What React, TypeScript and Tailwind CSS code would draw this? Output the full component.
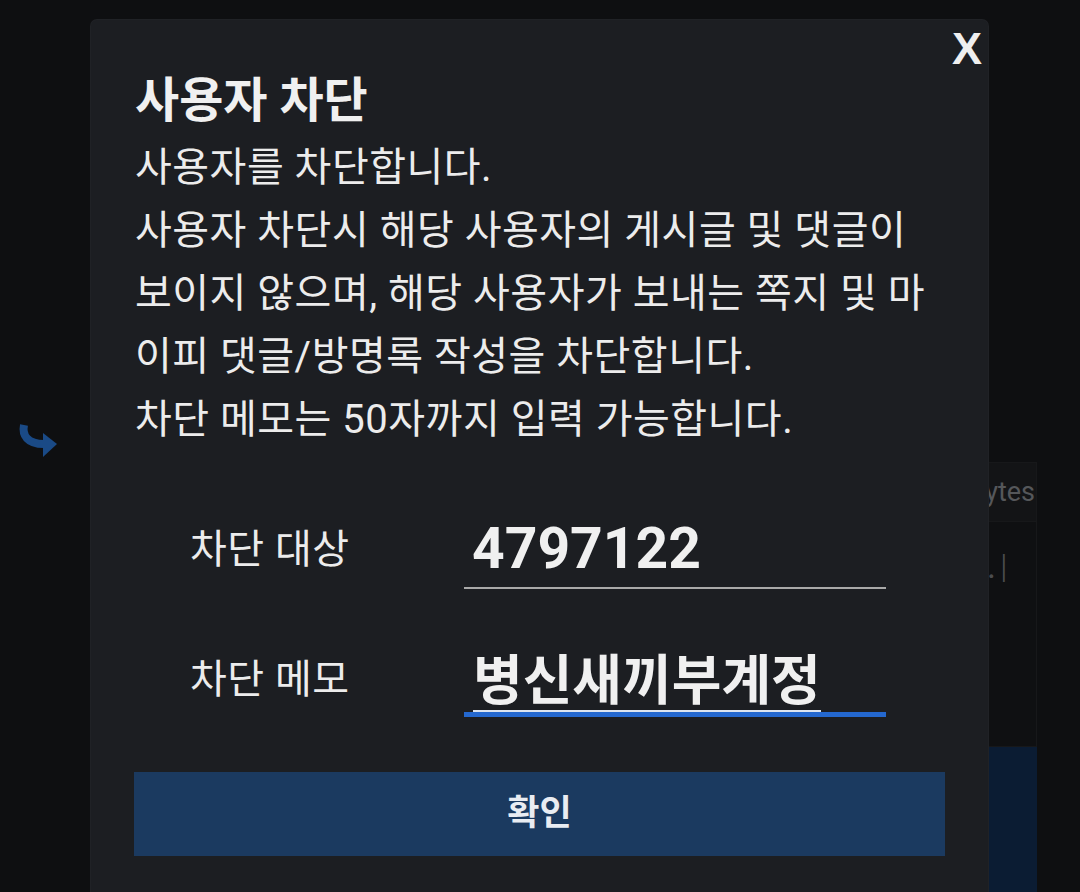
import React from "react";

const bodyLines = [
  "사용자를 차단합니다.",
  "사용자 차단시 해당 사용자의 게시글 및 댓글이",
  "보이지 않으며, 해당 사용자가 보내는 쪽지 및 마",
  "이피 댓글/방명록 작성을 차단합니다.",
  "차단 메모는 50자까지 입력 가능합니다.",
];

const ReplyArrow = () => (
  <svg width="40" height="40" viewBox="0 0 40 40" fill="none">
    <path d="M6 5 C 4 15, 9 24, 26 24" stroke="#1a4a86" strokeWidth="8" strokeLinecap="butt" />
    <polygon points="25,13 39,24 25,37" fill="#1a4a86" />
  </svg>
);

export default function App() {
  return (
    <div className="relative h-[892px] w-[1080px] overflow-hidden bg-[#0e0f11] font-['Roboto','Noto_Sans_CJK_KR',sans-serif]">
      {/* page behind the dialog */}
      <div className="flex h-full">
        <div className="w-[700px] pl-[18px] pt-[420px]">
          <ReplyArrow />
        </div>
        <div className="flex w-[337px] flex-col pt-[462px]">
          <div className="flex h-[60px] items-center justify-end border border-[#17181a] bg-[#131416] pr-[1px] text-[27px] text-[#55575a]">
            0 / 100 bytes
          </div>
          <div className="h-[225px] border border-t-0 border-[#17181a] bg-[#0f1012] pl-[286px] pt-[24px] text-[34px] leading-[40px] text-[#4b4c4e]">
            .<span className="ml-[4px] font-light">|</span>
          </div>
          <div className="flex-1 bg-[#0b1c33]" />
        </div>
      </div>

      {/* dialog */}
      <div className="absolute left-[91px] top-[20px] h-[900px] w-[897px] rounded-[6px] bg-[#1c1e22] px-[43px] pt-[54px] shadow-[0_0_0_1px_#202226]">
        <button className="absolute right-[6px] top-[6px] font-['Liberation_Sans',sans-serif] text-[45px] font-bold leading-[45px] text-[#efefef]">
          X
        </button>

        <h2 className="pl-[1px] text-[48px] font-bold leading-[54px] text-[#f0f0f0]">사용자 차단</h2>
        <div className="mt-[8px] whitespace-nowrap pl-[1px] text-[40px] leading-[63px] tracking-[0.5px] text-[#ececec]">
          {bodyLines.map((line) => (
            <div key={line}>{line}</div>
          ))}
        </div>

        <div className="ml-[56px] mt-[60px] flex flex-col gap-[54px]">
          <div className="flex items-center">
            <span className="w-[274px] text-[40px] leading-[50px] tracking-[0.5px] text-[#ececec]">차단 대상</span>
            <div className="flex h-[78px] w-[422px] items-center border-b-2 border-[#a9a9a9] pl-[8px] text-[57px] font-bold leading-[60px] text-[#f0f0f0]">
              4797122
            </div>
          </div>
          <div className="flex items-center">
            <span className="w-[274px] text-[40px] leading-[50px] tracking-[0.5px] text-[#ececec]">차단 메모</span>
            <div className="flex h-[74px] w-[422px] items-end border-b-[5px] border-[#2468cf] pl-[9px] text-[54px] font-bold leading-[56px] text-[#f0f0f0]">
              <span className="border-b-2 border-[#dde5f0]">병신새끼부계정</span>
            </div>
          </div>
        </div>

        <button className="mt-[55px] flex h-[84px] w-full items-center justify-center bg-[#1b3a60] text-[35px] font-bold text-[#e9ecf2]">
          확인
        </button>
      </div>
    </div>
  );
}
